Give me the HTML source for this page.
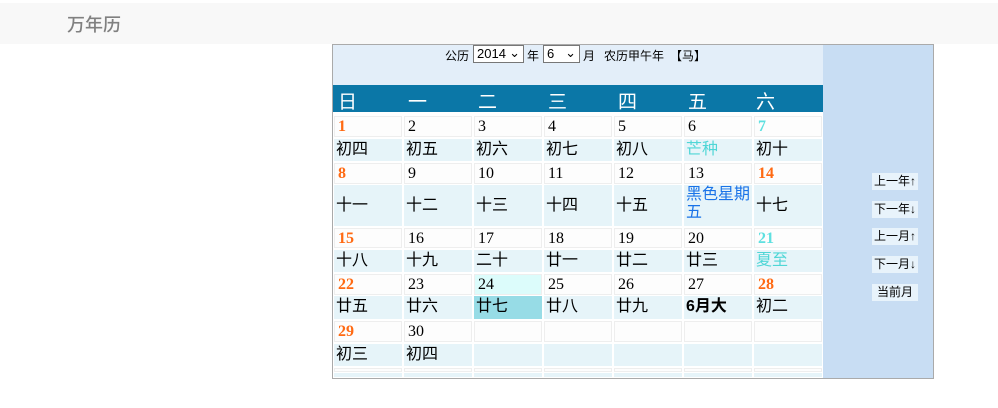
<!DOCTYPE html>
<html><head><meta charset="utf-8"><style>
*{margin:0;padding:0;box-sizing:border-box}
body{width:998px;height:408px;background:#fff;position:relative;overflow:hidden;font-family:"Liberation Sans","Noto Sans CJK SC",sans-serif}
.hd{position:absolute;left:0;top:3px;width:998px;height:41px;background:#f8f8f8}
.hd span{position:absolute;left:67px;top:8px;font-size:18px;color:#808080;font-weight:500}
.box{position:absolute;left:332px;top:44px;width:602px;height:335px;border:1px solid #aaa;background:#fff}
.top{position:absolute;left:333px;top:45px;width:490px;height:40px;background:#e3eef9;font-size:12px;color:#000}
.right{position:absolute;left:823px;top:45px;width:110px;height:333px;background:#c8ddf3}
.thr{position:absolute;left:333px;top:85px;width:490px;height:27px;background:#0b77a7}
.th{position:absolute;top:87px;color:#fff;font-size:19px;font-family:"Noto Sans CJK SC",sans-serif}
.c{position:absolute;width:68px;overflow:hidden}
.d{background:#fdfdfd;border:1px solid #eee;font-family:"Liberation Serif",serif;font-size:16px;padding-left:3px;line-height:19px}
.l{background:#e6f4f9;font-size:16px;padding-left:2px;line-height:21px}
.red{color:#ff6a13;font-weight:bold}
.cy{color:#5ee0e0;font-weight:bold}
.sel{display:inline-block;position:absolute;top:0;height:18px;border:1px solid #777;background:#fff;font-size:13px;line-height:16px;padding-left:3px}
.btn{position:absolute;left:872px;width:46px;height:17px;background:#e8f3fb;font-size:12px;line-height:17px;text-align:center}
</style></head><body>
<div class="hd"><span>万年历</span></div>
<div class="box"></div>
<div class="top">
<span style="position:absolute;left:112px;top:2px">公历</span>
<span class="sel" style="left:140px;width:51px">2014<span style="position:absolute;right:3px;top:-1px">⌄</span></span>
<span style="position:absolute;left:194px;top:2px">年</span>
<span class="sel" style="left:210px;width:37px">6<span style="position:absolute;right:3px;top:-1px">⌄</span></span>
<span style="position:absolute;left:250px;top:2px">月</span>
<span style="position:absolute;left:271px;top:2px">农历甲午年　【马】</span>
</div>
<div class="right"></div>
<div class="thr"></div>
<div class="th" style="left:338px">日</div><div class="th" style="left:408px">一</div><div class="th" style="left:478px">二</div><div class="th" style="left:548px">三</div><div class="th" style="left:618px">四</div><div class="th" style="left:688px">五</div><div class="th" style="left:756px">六</div>
<div id="g"></div>
<div class="btn" style="top:173px">上一年↑</div>
<div class="btn" style="top:201px">下一年↓</div>
<div class="btn" style="top:228px">上一月↑</div>
<div class="btn" style="top:256px">下一月↓</div>
<div class="btn" style="top:284px">当前月</div>
<script>
var rows=[[116,21,139,22],[163,21,185,41],[228,20,250,22],[274,21,296,23],[321,21,344,22],[368,4,373,4]];
var dates=[["1","2","3","4","5","6","7"],["8","9","10","11","12","13","14"],["15","16","17","18","19","20","21"],["22","23","24","25","26","27","28"],["29","30","","","","",""],["","","","","","",""]];
var lun=[["初四","初五","初六","初七","初八","<span style='color:#4fd6d6'>芒种</span>","初十"],["十一","十二","十三","十四","十五","<span style='color:#1a73e8;line-height:18px;display:block;padding-top:1px'>黑色星期五</span>","十七"],["十八","十九","二十","廿一","廿二","廿三","<span style='color:#4fd6d6'>夏至</span>"],["廿五","廿六","廿七","廿八","廿九","<b>6月大</b>","初二"],["初三","初四","","","","",""],["","","","","","",""]];
var h="";
for(var r=0;r<6;r++){for(var i=0;i<7;i++){var x=334+70*i;var R=rows[r];
var cls=i==0?"red":(i==6?((r==1||r==3)?"red":"cy"):"");
var ff=r==0&&i>0&&i<6?"font-family:'Liberation Sans',sans-serif;font-size:15px;":"";
var bg=(r==3&&i==2)?"background:#dcfcfb;":"";
h+="<div class='c d' style='left:"+x+"px;top:"+R[0]+"px;height:"+R[1]+"px;"+ff+bg+"'><span class='"+cls+"'>"+dates[r][i]+"</span></div>";
var lb=(r==3&&i==2)?"background:#97dce6;":"";
var lh=(r==1&&i!=5)?"line-height:41px;":"";
h+="<div class='c l' style='left:"+x+"px;top:"+R[2]+"px;height:"+R[3]+"px;"+lb+lh+"'>"+lun[r][i]+"</div>";}}
document.getElementById("g").innerHTML=h;
</script>
</body></html>
